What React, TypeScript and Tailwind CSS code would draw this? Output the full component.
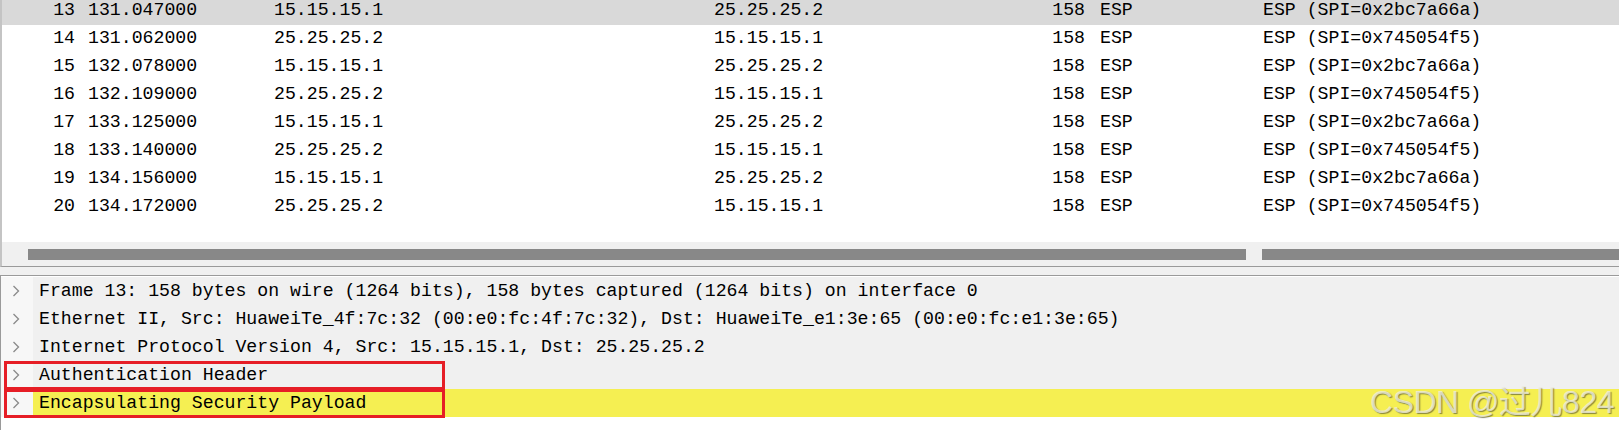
import React from "react";

const packets = [
  { no: 13, time: "131.047000", src: "15.15.15.1", dst: "25.25.25.2", len: 158, proto: "ESP", info: "ESP (SPI=0x2bc7a66a)" },
  { no: 14, time: "131.062000", src: "25.25.25.2", dst: "15.15.15.1", len: 158, proto: "ESP", info: "ESP (SPI=0x745054f5)" },
  { no: 15, time: "132.078000", src: "15.15.15.1", dst: "25.25.25.2", len: 158, proto: "ESP", info: "ESP (SPI=0x2bc7a66a)" },
  { no: 16, time: "132.109000", src: "25.25.25.2", dst: "15.15.15.1", len: 158, proto: "ESP", info: "ESP (SPI=0x745054f5)" },
  { no: 17, time: "133.125000", src: "15.15.15.1", dst: "25.25.25.2", len: 158, proto: "ESP", info: "ESP (SPI=0x2bc7a66a)" },
  { no: 18, time: "133.140000", src: "25.25.25.2", dst: "15.15.15.1", len: 158, proto: "ESP", info: "ESP (SPI=0x745054f5)" },
  { no: 19, time: "134.156000", src: "15.15.15.1", dst: "25.25.25.2", len: 158, proto: "ESP", info: "ESP (SPI=0x2bc7a66a)" },
  { no: 20, time: "134.172000", src: "25.25.25.2", dst: "15.15.15.1", len: 158, proto: "ESP", info: "ESP (SPI=0x745054f5)" },
];

const tree = [
  { label: "Frame 13: 158 bytes on wire (1264 bits), 158 bytes captured (1264 bits) on interface 0" },
  { label: "Ethernet II, Src: HuaweiTe_4f:7c:32 (00:e0:fc:4f:7c:32), Dst: HuaweiTe_e1:3e:65 (00:e0:fc:e1:3e:65)" },
  { label: "Internet Protocol Version 4, Src: 15.15.15.1, Dst: 25.25.25.2" },
  { label: "Authentication Header", boxed: true },
  { label: "Encapsulating Security Payload", boxed: true, selected: true },
];

function Chevron() {
  return (
    <svg width="8" height="12" viewBox="0 0 8 12" className="shrink-0">
      <polyline points="1.5,1 6.5,6 1.5,11" fill="none" stroke="#8a8a8a" strokeWidth="1.3" />
    </svg>
  );
}

export default function App() {
  return (
    <div
      className="relative w-[1619px] h-[430px] overflow-hidden bg-white flex flex-col text-[18.2px] text-black"
      style={{ fontFamily: '"Liberation Mono", "DejaVu Sans Mono", monospace' }}
    >
      {/* packet list */}
      <div className="h-[267px] shrink-0 flex flex-col border-l-2 border-b border-l-[#c4c4c4] border-b-[#9a9a9a]">
        <div className="h-[242px] overflow-hidden">
          <div className="-mt-[3px]">
            {packets.map((p) => (
              <div
                key={p.no}
                className={`h-[28px] leading-[26px] grid grid-cols-[73px_199px_440px_286px_85px_178px_1fr] whitespace-pre ${
                  p.no === 13 ? "bg-[#d9d9d9]" : ""
                }`}
              >
                <span className="text-right">{p.no}</span>
                <span className="pl-[13px]">{p.time}</span>
                <span>{p.src}</span>
                <span>{p.dst}</span>
                <span className="text-right">{p.len}</span>
                <span className="pl-[15px]">{p.proto}</span>
                <span>{p.info}</span>
              </div>
            ))}
          </div>
        </div>
        <div className="h-[24px] bg-[#f0f0f0] flex items-center gap-[16px] pl-[26px]">
          <div className="w-[1218px] h-[11px] bg-[#888888]" />
          <div className="flex-1 h-[11px] bg-[#888888]" />
        </div>
      </div>

      {/* splitter */}
      <div className="h-[8px] shrink-0 bg-[#f0f0f0]" />

      {/* packet details */}
      <div className="flex-1 border-t border-l border-[#9a9a9a] bg-white pt-[1px]">
        {tree.map((t, i) => (
          <div key={i} className="relative h-[28px] flex">
            <div className="w-[32px] shrink-0 bg-[#f7f7f7] flex items-center pl-[11px]">
              <Chevron />
            </div>
            <div
              className={`flex-1 pl-[6px] leading-[28px] whitespace-pre ${
                t.selected ? "bg-[#f5ef52]" : "bg-[#f0f0f0]"
              }`}
            >
              {t.label}
            </div>
            {t.boxed && (
              <div className="absolute left-[3px] top-[0px] w-[441px] h-[29px] border-[3px] border-[#e61e26]" />
            )}
          </div>
        ))}
      </div>

      {/* watermark */}
      <div
        className="absolute right-[5px] bottom-[12px] text-[32px] leading-none text-[#efeedf]/80 tracking-[-0.5px]"
        style={{
          fontFamily: '"Liberation Sans", "Noto Sans CJK SC", sans-serif',
          textShadow: "1px 1px 1px rgba(90,90,50,0.7)",
        }}
      >
        CSDN @过儿824
      </div>
    </div>
  );
}
